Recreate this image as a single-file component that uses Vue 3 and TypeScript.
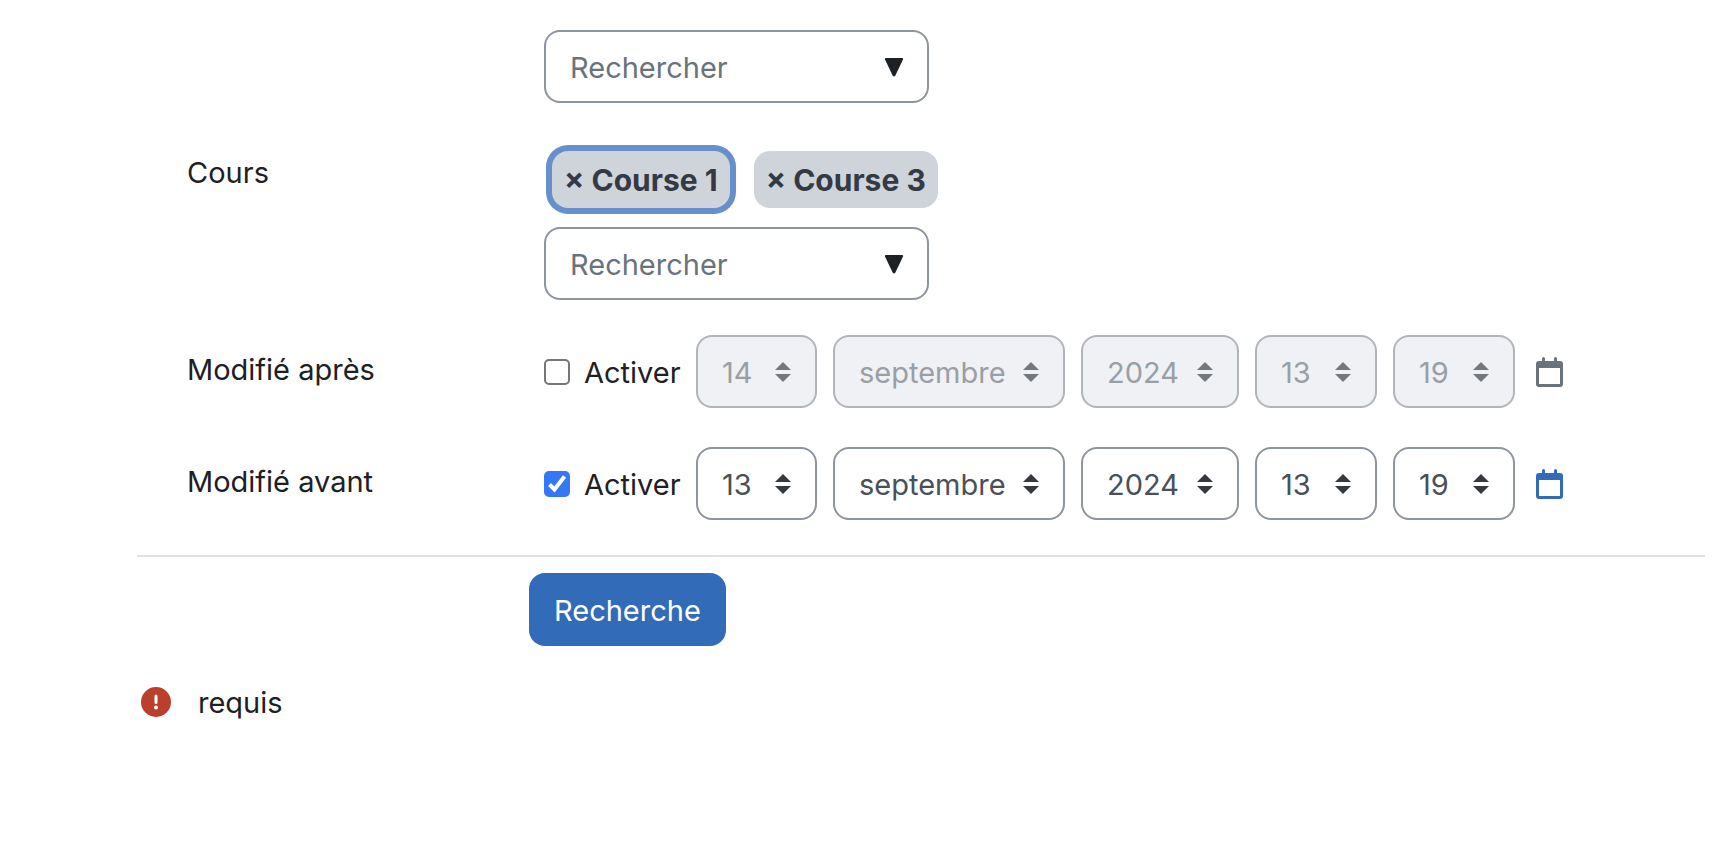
<script setup lang="ts">
import { ref } from 'vue'

interface DateField {
  key: string
  name: string
  value: string
}

interface DateRow {
  id: string
  label: string
  enabled: boolean
  fields: DateField[]
}

const courses = ref<string[]>(['Course 1', 'Course 3'])
const previousQuery = ref('')
const courseQuery = ref('')

const makeFields = (day: string): DateField[] => [
  { key: 'day', name: 'Jour', value: day },
  { key: 'month', name: 'Mois', value: 'septembre' },
  { key: 'year', name: 'Année', value: '2024' },
  { key: 'hour', name: 'Heure', value: '13' },
  { key: 'minute', name: 'Minute', value: '19' },
]

const dateRows = ref<DateRow[]>([
  { id: 'after', label: 'Modifié après', enabled: false, fields: makeFields('14') },
  { id: 'before', label: 'Modifié avant', enabled: true, fields: makeFields('13') },
])

const removeCourse = (course: string) => {
  courses.value = courses.value.filter((item) => item !== course)
}
</script>

<template>
  <form class="page" @submit.prevent>
    <div class="rows">
      <div class="row">
        <div class="field">
          <div class="search">
            <input v-model="previousQuery" type="text" placeholder="Rechercher" aria-label="Rechercher" />
            <button type="button" class="toggle" aria-label="Afficher les suggestions">
              <svg viewBox="0 0 20 20" width="20" height="20" aria-hidden="true">
                <path d="M2 1h16q1.600 0 1 1.500l-7.600 16q-1.400 2.200-2.800 0L1 2.500Q.400 1 2 1z" />
              </svg>
            </button>
          </div>
        </div>
      </div>

      <div class="row courses">
        <label class="label" for="courses">Cours</label>
        <div class="field">
          <div class="badges">
            <button
              v-for="(course, index) in courses"
              :key="course"
              type="button"
              class="badge"
              :class="{ active: index === 0 }"
              @click="removeCourse(course)"
            >× {{ course }}</button>
          </div>
          <div class="search">
            <input id="courses" v-model="courseQuery" type="text" placeholder="Rechercher" />
            <button type="button" class="toggle" aria-label="Afficher les cours">
              <svg viewBox="0 0 20 20" width="20" height="20" aria-hidden="true">
                <path d="M2 1h16q1.600 0 1 1.500l-7.600 16q-1.400 2.200-2.800 0L1 2.500Q.400 1 2 1z" />
              </svg>
            </button>
          </div>
        </div>
      </div>

      <div v-for="row in dateRows" :key="row.id" class="row" role="group" :aria-labelledby="row.id">
        <span :id="row.id" class="label">{{ row.label }}</span>
        <div class="field dates">
          <label class="enable">
            <input v-model="row.enabled" type="checkbox" />
            <span>Activer</span>
          </label>
          <select
            v-for="field in row.fields"
            :key="field.key"
            v-model="field.value"
            :class="field.key"
            :aria-label="field.name"
            :disabled="!row.enabled"
          >
            <option :value="field.value">{{ field.value }}</option>
          </select>
          <button type="button" class="calendar" :disabled="!row.enabled" aria-label="Calendrier">
            <svg viewBox="0 0 28 30" width="28" height="30" aria-hidden="true">
              <path
                fill-rule="evenodd"
                d="M6 1.500a1.500 1.500 0 0 1 3 0V4h9V1.500a1.500 1.500 0 0 1 3 0V4h3a3 3 0 0 1 3 3v20a3 3 0 0 1-3 3H3a3 3 0 0 1-3-3V7a3 3 0 0 1 3-3h3zM3 11v15.500q0 .500.500.500h20q.500 0 .500-.500V11z"
              />
            </svg>
          </button>
        </div>
      </div>
    </div>

    <div class="actions">
      <button type="submit" class="submit">Recherche</button>
    </div>

    <div class="required">
      <svg viewBox="0 0 30 30" width="30" height="30" aria-hidden="true">
        <circle cx="15" cy="15" r="15" fill="#bb3f2d" />
        <path d="M15 9v6.500" stroke="#fff" stroke-width="3" stroke-linecap="round" />
        <circle cx="15" cy="20.500" r="2" fill="#fff" />
      </svg>
      <span>requis</span>
    </div>
  </form>
</template>

<style>
body {
  margin: 0;
  background: #fff;
}
</style>

<style scoped>
* {
  box-sizing: border-box;
}

.page {
  padding: 30px 9px 30px 137px;
  font-family: Inter, "Liberation Sans", sans-serif;
  font-size: 29px;
  line-height: 45px;
  color: #1d2125;
}

button,
input,
select {
  margin: 0;
  font: inherit;
}

.rows {
  display: flex;
  flex-direction: column;
  gap: 39px;
  padding: 0 0 35px 50px;
  border-bottom: 2px solid #dee2e6;
}

.row {
  display: grid;
  grid-template-columns: 357px 1fr;
}

.label {
  padding-top: 12px;
}

.field {
  grid-column: 2;
}

.courses {
  margin-bottom: -4px;
  padding-top: 8px;
}

.courses .label {
  padding-top: 0;
}

.badges {
  display: flex;
  flex-wrap: wrap;
  gap: 24px;
  padding: 1px 8px 19px;
}

.badge {
  height: 57px;
  padding: 2px 12px 0;
  border: 0;
  border-radius: 16px;
  background: #cfd3da;
  color: #343a43;
  font-size: 30px;
  font-weight: 700;
}

.badge.active {
  box-shadow: 0 0 0 6px #6590cb;
}

.search {
  display: flex;
  align-items: center;
  width: 385px;
  height: 73px;
  padding: 0 23px 0 24px;
  border: 2px solid #8f959e;
  border-radius: 16px;
}

.search input {
  flex: 1;
  min-width: 0;
  padding: 2px 0 0;
  border: 0;
  outline: 0;
  background: none;
  color: #495057;
}

.search input::placeholder {
  color: #6a737b;
  opacity: 1;
}

.toggle,
.calendar {
  display: flex;
  padding: 0;
  border: 0;
  background: none;
}

.toggle {
  color: #1d2125;
}

.toggle svg,
.calendar svg {
  fill: currentColor;
}

.dates {
  display: flex;
  align-items: center;
  gap: 16px;
}

.enable {
  display: flex;
  align-items: center;
  gap: 14px;
  width: 136px;
}

.enable span {
  padding-top: 2px;
}

.enable input {
  appearance: none;
  flex: none;
  width: 26px;
  height: 26px;
  border: 2px solid #767676;
  border-radius: 5px;
  background: #fff;
}

.enable input:checked {
  border-color: #3478f6;
  background: #3478f6 url("data:image/svg+xml,%3Csvg xmlns='http://www.w3.org/2000/svg' viewBox='0 0 22 22'%3E%3Cpath d='M3.500 11.500L8.500 16.500L18.500 3.500' fill='none' stroke='%23fff' stroke-width='4'/%3E%3C/svg%3E") center / 22px no-repeat;
}

select {
  appearance: none;
  height: 73px;
  padding: 2px 0 0 24px;
  border: 2px solid #8f959e;
  border-radius: 16px;
  color: #495057;
  opacity: 1;
  background: #fff url("data:image/svg+xml,%3Csvg xmlns='http://www.w3.org/2000/svg' viewBox='0 0 4 5'%3E%3Cpath fill='%23343a40' d='M2 0L0 2h4zm0 5L0 3h4z'/%3E%3C/svg%3E") right 24px center / 16px 20px no-repeat;
}

select:disabled {
  border-color: #b1b5bb;
  color: #999fa4;
  background-color: #f0f1f4;
  background-image: url("data:image/svg+xml,%3Csvg xmlns='http://www.w3.org/2000/svg' viewBox='0 0 4 5'%3E%3Cpath fill='%2374777c' d='M2 0L0 2h4zm0 5L0 3h4z'/%3E%3C/svg%3E");
}

.day {
  width: 121px;
}

.hour,
.minute {
  width: 122px;
}

.month {
  width: 232px;
}

.year {
  width: 158px;
}

.calendar {
  margin-left: 5px;
  color: #326bb8;
}

.calendar:disabled {
  color: #6a737b;
}

.actions {
  padding: 16px 0 0 392px;
}

.submit {
  height: 73px;
  padding: 2px 25px 0;
  border: 0;
  border-radius: 16px;
  background: #326bb8;
  color: #fff;
}

.required {
  display: flex;
  align-items: center;
  gap: 27px;
  padding: 32px 4px 0;
}

.required span {
  padding-top: 2px;
}
</style>
